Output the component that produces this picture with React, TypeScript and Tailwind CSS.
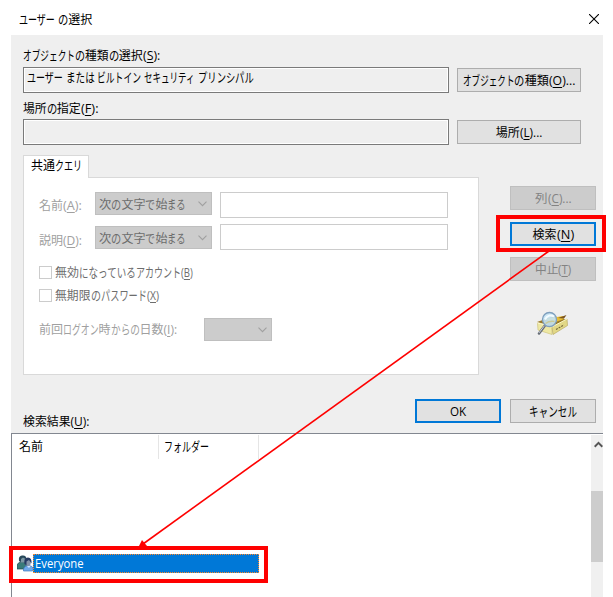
import { useLayoutEffect, useRef, useState, type ReactNode } from "react";

/* A run of glyphs condensed or widened to an exact advance width. */
function Run({ w, children }: { w: number; children: ReactNode }) {
  const ref = useRef<HTMLSpanElement>(null);
  const [scale, setScale] = useState(1);
  useLayoutEffect(() => {
    if (ref.current) setScale(w / ref.current.offsetWidth);
  }, [w]);
  const kana = typeof children === "string" && /^[\u3041-\u30ff]+$/.test(children);
  return (
    <span className="block h-4 shrink-0" style={{ width: w }}>
      <span
        ref={ref}
        className={`inline-block origin-left whitespace-pre leading-4 ${kana ? "text-[13px]" : "text-[12px]"}`}
        style={{ transform: `scaleX(${scale})` }}
      >
        {children}
      </span>
    </span>
  );
}

function Text({ runs, className = "" }: { runs: [ReactNode, number][]; className?: string }) {
  return (
    <span className={`flex h-4 ${className}`}>
      {runs.map(([t, w], i) => (
        <Run key={i} w={w}>
          {t}
        </Run>
      ))}
    </span>
  );
}

const Key = ({ k, after = "" }: { k: string; after?: string }) => (
  <>
    (<span className="underline underline-offset-2">{k}</span>){after}
  </>
);

const Chevron = () => (
  <svg width="9" height="6" viewBox="0 0 9 6" fill="none" stroke="#a0a0a0" strokeWidth="1.1">
    <path d="M.5 .7 4.5 4.7 8.5 .7" />
  </svg>
);

function Button({
  runs,
  className = "",
  kind = "normal",
}: {
  runs: [ReactNode, number][];
  className?: string;
  kind?: "normal" | "focus" | "disabled";
}) {
  const look = {
    normal: "border border-[#adadad] bg-[#e1e1e1]",
    focus: "border-2 border-[#0078d7] bg-[#e1e1e1]",
    disabled: "border border-[#bfbfbf] bg-[#cccccc] text-[#838383]",
  }[kind];
  return (
    <button className={`flex h-6 items-center justify-center pb-px ${look} ${className}`}>
      <Text runs={runs} />
    </button>
  );
}

function QueryRow({ runs, lower = false }: { runs: [ReactNode, number][]; lower?: boolean }) {
  return (
    <div className="flex h-[26px] items-start">
      <Text
        className={`w-[56px] shrink-0 text-[#a0a0a0] ${lower ? "mt-2" : "mt-[5px]"}`}
        runs={runs}
      />
      <div
        className={`flex h-[23px] w-[117px] shrink-0 items-center justify-between border border-[#bfbfbf] bg-[#cccccc] pr-1 pl-[3px] text-[#6d6d6d] ${lower ? "mt-[2px]" : ""}`}
      >
        <Text
          runs={[
            ["次", 12.3],
            ["の", 10.2],
            ["文字", 24],
            ["で", 10],
            ["始", 12],
            ["まる", 18.5],
          ]}
        />
        <Chevron />
      </div>
      <div className="ml-2 h-[26px] w-[228px] border border-[#cccccc] bg-white" />
    </div>
  );
}

function Check({ runs }: { runs: [ReactNode, number][] }) {
  return (
    <div className="flex h-[13px] items-center">
      <span className="h-[13px] w-[13px] border border-[#cccccc] bg-white" />
      <Text className="-mt-px ml-[3px] text-[#6d6d6d]" runs={runs} />
    </div>
  );
}

function SearchIcon() {
  return (
    <svg className="mt-[30px] ml-[26px]" width="34" height="25" viewBox="0 0 34 25">
      <path d="M1 11 18 5 31 9 16 15Z" fill="#9a7a2a" />
      <path d="M9 8 27 5 28 8 17 12Z" fill="#e9bf35" />
      <path d="M22 7 30.5 4 28 7.5Z" fill="#7a5420" />
      <path d="M1.5 12 16 16 16 23.5 2 19Z" fill="#eee8a4" stroke="#cfc47c" strokeWidth=".7" />
      <path d="M16 16 31 8 31.5 14.5 17 23.5Z" fill="#e2d886" stroke="#b9ab62" strokeWidth=".7" />
      <path d="m1.5 12 14.5 4 15-8" fill="none" stroke="#fffbc8" />
      <path d="m20 18.5 8-4.5" stroke="#706637" strokeWidth="1.1" strokeDasharray="2 1" />
      <path d="m8.6 15-5.6 7.5" stroke="#666c76" strokeWidth="2.6" strokeLinecap="round" />
      <path d="m8.2 15-5 6.6" stroke="#ccd2d9" strokeWidth="1" strokeLinecap="round" />
      <circle cx="13.5" cy="8.5" r="7" fill="#c4e3f4" fillOpacity=".9" stroke="#7f9fbd" strokeWidth="1.3" />
      <path d="M9 8.5C11 4 15 3.6 18 5.5" stroke="#f4fcff" strokeWidth="2" fill="none" />
      <path d="M9.5 12.5q4-3 9-2" stroke="#c8c997" strokeWidth="1.3" fill="none" />
    </svg>
  );
}

function UsersIcon() {
  return (
    <svg className="mt-px" width="17" height="17" viewBox="0 0 17 17">
      <path d="M0 14V10q1-3 5-3 5 0 6 4v3z" fill="#397b79" stroke="#1e4650" strokeWidth=".7" />
      <circle cx="5.4" cy="4.2" r="3.4" fill="#7d98a4" />
      <path d="M2 6Q1 .5 6 .5q3.5 0 3.5 4L6 2.5 4 4v3z" fill="#28485a" />
      <path d="M6.5 16v-2q1-3.500 5-3.500 4 0 5 3.500L15.500 16z" fill="#6fa8e8" stroke="#3f78c0" strokeWidth=".7" />
      <ellipse cx="10.8" cy="7.600" rx="3" ry="3.500" fill="#8594a8" />
      <path d="M7.500 9Q6.300 2.500 11 2.500q4 0 3.500 6L12 5 9.500 6.500v4z" fill="#263a63" />
      <path d="m10 11 2 2 1.500-2" fill="#cfe4ff" />
    </svg>
  );
}

export default function App() {
  return (
    <div className="relative flex h-[597px] w-[613px] flex-col overflow-hidden bg-white font-['Open_Sans','Noto_Sans_CJK_JP',sans-serif] text-[12px] text-black">
      <header className="flex h-[35px] shrink-0 items-center justify-between pt-[3px] pr-[14px] pl-[19px]">
        <Text
          runs={[
            ["ユーザー", 36],
            [" ", 3],
            ["の", 10.3],
            ["選択", 24],
          ]}
        />
        <svg width="10" height="10" viewBox="0 0 10 10" stroke="#000" strokeWidth="1.1">
          <path d="m0 0 10 10M10 0 0 10" />
        </svg>
      </header>

      <main className="ml-[11px] flex h-[562px] w-[592px] shrink-0 flex-col bg-[#efefef]">
        <section className="h-[120px] shrink-0 pt-3 pl-3">
          <Text
            runs={[
              ["オブジェクト", 52],
              ["の", 10],
              ["種類", 23.5],
              ["の", 10.3],
              ["選択", 24],
              [<Key k="S" after=":" />, 17.5],
            ]}
          />
          <div className="mt-1 flex items-center gap-2">
            <div className="h-[26px] w-[426px] border border-[#7a7a7a] pt-px pl-[3px] shadow-[inset_0_0_0_1px_#fff]">
              <Text
                runs={[
                  ["ユーザー", 36],
                  [" ", 2.7],
                  ["または", 28.7],
                  [" ", 3],
                  ["ビルトイン", 44],
                  [" ", 3],
                  ["セキュリティ", 50.5],
                  [" ", 3],
                  ["プリンシパル", 56],
                ]}
              />
            </div>
            <Button
              className="w-[124px]"
              runs={[
                ["オブジェクト", 51.5],
                ["の", 10.3],
                ["種類", 24],
                [<Key k="O" after="..." />, 26.5],
              ]}
            />
          </div>
          <Text
            className="mt-[7px]"
            runs={[
              ["場所", 23.5],
              ["の", 10.3],
              ["指定", 24],
              [<Key k="F" after=":" />, 17],
            ]}
          />
          <div className="mt-[3px] flex items-center gap-2">
            <div className="h-[26px] w-[426px] border border-[#7a7a7a] shadow-[inset_0_0_0_1px_#fff]" />
            <Button
              className="w-[124px]"
              runs={[
                ["場所", 24],
                [<Key k="L" after="..." />, 22.5],
              ]}
            />
          </div>
        </section>

        <section className="flex h-[220px] shrink-0 pl-3">
          <div className="flex w-[456px] flex-col">
            <div className="z-10 -mb-px h-[23px] w-[66px] border border-b-0 border-[#d9d9d9] bg-white pt-px pl-[7px]">
              <Text
                runs={[
                  ["共通", 24],
                  ["クエリ", 27],
                ]}
              />
            </div>
            <div className="h-[198px] border border-[#d9d9d9] bg-white pt-[14px] pl-[15px]">
              <div className="flex flex-col gap-[6px]">
                <QueryRow
                  runs={[
                    ["名前", 24],
                    [<Key k="A" after=":" />, 19],
                  ]}
                />
                <QueryRow
                  lower
                  runs={[
                    ["説明", 24],
                    [<Key k="D" after=":" />, 19],
                  ]}
                />
              </div>
              <div className="mt-4 flex flex-col gap-[10px]">
                <Check
                  runs={[
                    ["無効", 24],
                    ["になっている", 56.5],
                    ["アカウント", 45],
                    [<Key k="B" />, 12],
                  ]}
                />
                <Check
                  runs={[
                    ["無期限", 35.5],
                    ["の", 10],
                    ["パスワード", 46],
                    [<Key k="X" />, 12],
                  ]}
                />
              </div>
              <div className="mt-4 flex h-[23px] items-center">
                <Text
                  className="-mt-px w-[165px] text-[#a0a0a0]"
                  runs={[
                    ["前回", 24],
                    ["ログオン", 35.5],
                    ["時", 12],
                    ["からの", 29],
                    ["日数", 24],
                    [<Key k="I" after=":" />, 14],
                  ]}
                />
                <div className="flex h-[23px] w-[68px] items-center justify-end border border-[#bfbfbf] bg-[#cccccc] pr-1">
                  <Chevron />
                </div>
              </div>
            </div>
          </div>

          <div className="ml-[31px] flex w-[86px] flex-col pt-[31px]">
            <Button
              kind="disabled"
              runs={[
                ["列", 12.5],
                [<Key k="C" after="..." />, 23.5],
              ]}
            />
            <Button
              kind="focus"
              className="mt-3"
              runs={[
                ["検索", 24],
                [<Key k="N" />, 17],
              ]}
            />
            <Button
              kind="disabled"
              className="mt-[11px]"
              runs={[
                ["中止", 23.5],
                [<Key k="T" />, 13.5],
              ]}
            />
            <SearchIcon />
          </div>
        </section>

        <section className="flex h-[58px] shrink-0 justify-between pr-[7px] pl-3">
          <Text
            className="mt-[38px]"
            runs={[
              ["検索結果", 47.5],
              [<Key k="U" after=":" />, 19],
            ]}
          />
          <div className="flex gap-[9px] pt-6">
            <Button kind="focus" className="w-[86px]" runs={[["OK", 16.5]]} />
            <Button className="w-[86px]" runs={[["キャンセル", 48]]} />
          </div>
        </section>

        <section className="flex h-[164px] shrink-0 border-t border-l border-[#828790] bg-white">
          <div className="flex w-[579px] flex-col">
            <div className="mt-px flex h-6">
              <div className="w-[147px] border-r border-[#e5e5e5] pt-[3px] pl-[7px]">
                <Text runs={[["名前", 24]]} />
              </div>
              <div className="w-[100px] border-r border-[#e5e5e5] pt-[3px] pl-[5px]">
                <Text runs={[["フォルダー", 45]]} />
              </div>
            </div>
            <div className="mt-[95px] flex h-[19px] pl-[5px]">
              <UsersIcon />
              <div className="ml-[-1px] flex h-[19px] w-[226px] items-center border border-dotted border-[#ff8728] bg-[#0078d7] pb-px pl-px text-white">
                <Text runs={[["Everyone", 49]]} />
              </div>
            </div>
          </div>
          <div className="mt-px w-3 bg-[#f0f0f0] pt-[6px]">
            <svg className="ml-[3px]" width="9" height="7" viewBox="0 0 9 7" fill="none" stroke="#555" strokeWidth="2">
              <path d="M.7 5.7 4.5 1.9 8.3 5.7" />
            </svg>
            <div className="mt-[43px] h-[71px] bg-[#cdcdcd]" />
          </div>
        </section>
      </main>

      <div className="absolute top-[215px] left-[496px] h-[37px] w-[110px] border-4 border-[#fe0000]" />
      <div className="absolute top-[546px] left-[9px] h-[37px] w-[259px] border-4 border-[#fe0000]" />
      <svg className="absolute inset-0" width="613" height="597" viewBox="0 0 613 597">
        <path d="M549 251 143 544" stroke="#fe0000" strokeWidth="1.6" />
        <path d="M138 548 142 540 147 546Z" fill="#fe0000" />
      </svg>
    </div>
  );
}
